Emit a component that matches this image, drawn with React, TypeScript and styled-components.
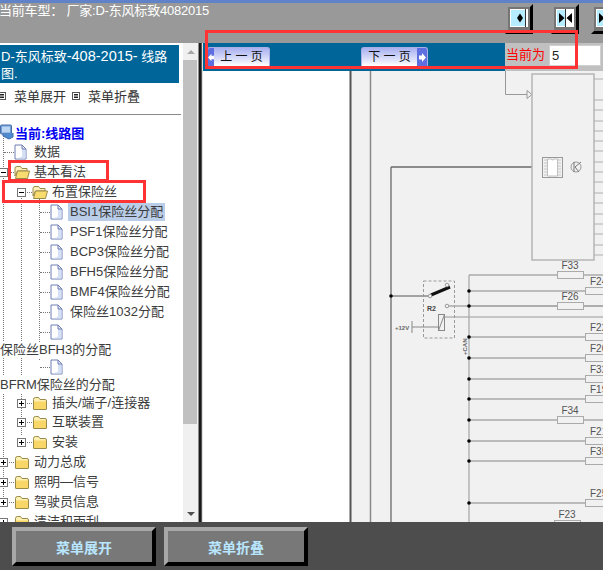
import styled, { createGlobalStyle } from 'styled-components'

const CJK = `'Liberation Sans', 'Noto Sans CJK SC', sans-serif`

const GlobalStyle = createGlobalStyle`
  html, body {
    margin: 0;
    padding: 0;
    background: #4d4d4d;
    overflow: hidden;
  }
  * {
    box-sizing: border-box;
  }
`

const Page = styled.div`
  position: relative;
  width: 603px;
  height: 570px;
  display: flex;
  flex-direction: column;
  overflow: hidden;
  font-family: ${CJK};
  font-size: 13px;
`

const TopBar = styled.header`
  height: 43px;
  flex: none;
  background: #999999;
  border-top: 3px solid #5f82c9;
  display: flex;
  align-items: flex-start;
  position: relative;
`

const CarModel = styled.div`
  width: 505px;
  flex: none;
  line-height: 16px;
  font-size: 13px;
  letter-spacing: -0.2px;
  text-indent: -1px;
  color: #ffffff;
  white-space: pre;
`

const TopButton = styled.div<{ $gap?: number }>`
  width: 28px;
  height: 30px;
  flex: none;
  margin-top: 1px;
  margin-left: ${({ $gap }) => $gap ?? 0}px;
  border-style: solid;
  border-width: 3px;
  border-color: #999999 #000000 #000000 #999999;
  background: #757575;
  padding: 2px 2px;
  display: flex;
`

const Main = styled.div`
  flex: 1;
  min-height: 0;
  display: flex;
`

const LeftPanel = styled.aside`
  width: 183px;
  flex: none;
  background: #ffffff;
  padding-top: 2px;
  overflow: hidden;
`

const PanelTitle = styled.div`
  width: 179px;
  height: 38px;
  background: #006699;
  color: #ffffff;
  padding: 3px 0 0 1px;
  font-size: 13px;
  line-height: 17px;
`

const TitleLatin = styled.span`
  font-size: 14.5px;
`

const MenuRow = styled.div`
  width: 181px;
  height: 32px;
  border-bottom: 1px solid #8a8a8a;
  display: flex;
  align-items: center;
  padding-bottom: 6px;
  color: #333333;
`

const MenuToggle = styled.span<{ $left: number }>`
  display: inline-flex;
  align-items: center;
  margin-left: ${({ $left }) => $left}px;
`

const MenuGlyph = styled.svg`
  width: 8px;
  height: 8px;
  margin-right: 8px;
  flex: none;
`

const Tree = styled.div`
  position: relative;
  padding-top: 7px;
  color: #3c3c3c;
`

const TreeGuide = styled.div<{ $left: number; $top: number; $height: number }>`
  position: absolute;
  left: ${({ $left }) => $left}px;
  top: ${({ $top }) => $top}px;
  height: ${({ $height }) => $height}px;
  border-left: 1px dotted #777777;
`

const Row = styled.div<{ $level: number; $height?: number }>`
  position: relative;
  height: ${({ $height }) => $height ?? 20}px;
  padding-left: ${({ $level }) => $level * 18}px;
  display: flex;
  align-items: center;
  white-space: nowrap;
`

const Slot = styled.span`
  position: relative;
  width: 14px;
  height: 100%;
  flex: none;
  &::after {
    content: '';
    position: absolute;
    left: 4px;
    right: 0;
    top: 50%;
    border-top: 1px dotted #777777;
  }
`

const Expander = styled.span`
  position: absolute;
  z-index: 1;
  left: -1px;
  top: 50%;
  margin-top: -4px;
  width: 9px;
  height: 9px;
  background: #ffffff;
  border: 1px solid #777777;
  &::before {
    content: '';
    position: absolute;
    left: 1px;
    right: 1px;
    top: 3px;
    height: 1px;
    background: #000000;
  }
`

const PlusExpander = styled(Expander)`
  &::after {
    content: '';
    position: absolute;
    top: 1px;
    bottom: 1px;
    left: 3px;
    width: 1px;
    background: #000000;
  }
`

const IconCell = styled.span`
  width: 16px;
  height: 16px;
  flex: none;
  display: flex;
`

const Label = styled.span<{ $selected?: boolean }>`
  margin-left: ${({ $selected }) => ($selected ? 2 : 4)}px;
  padding: ${({ $selected }) => ($selected ? '0 2px' : '0')};
  line-height: 18px;
  background: ${({ $selected }) => ($selected ? '#b9cde8' : 'transparent')};
`

const RootLabel = styled.span`
  color: #0000f0;
  font-weight: 700;
  margin-left: -1px;
`

const WrapLine = styled.div<{ $height: number }>`
  position: relative;
  height: ${({ $height }) => $height}px;
  line-height: ${({ $height }) => $height}px;
  white-space: nowrap;
  background: #ffffff;
`

const ScrollBar = styled.div`
  width: 15px;
  flex: none;
  background: #f0f0f0;
  display: flex;
  flex-direction: column;
  align-items: stretch;
`

const ScrollArrow = styled.div<{ $up?: boolean }>`
  height: 17px;
  flex: none;
  display: flex;
  align-items: center;
  justify-content: center;
  &::before {
    content: '';
    border-left: 4px solid transparent;
    border-right: 4px solid transparent;
    border-top: ${({ $up }) => ($up ? '0' : '4px solid #505050')};
    border-bottom: ${({ $up }) => ($up ? '4px solid #a8a8a8' : '0')};
  }
`

const ScrollThumb = styled.div`
  height: 364px;
  margin-right: 1px;
  background: #c0c0c0;
`

const ScrollTrack = styled.div`
  flex: 1;
`

const Divider = styled.div`
  width: 5px;
  flex: none;
  background: linear-gradient(90deg, #8c8c8c 0 1px, #1a1a1a 1px 3px, #555555 3px 4px, #e0e0e0 4px 5px);
`

const RightPanel = styled.main`
  flex: 1;
  min-width: 0;
  display: flex;
  flex-direction: column;
  background: #ffffff;
`

const PageToolbar = styled.div`
  height: 28px;
  flex: none;
  background: #006699;
  padding-left: 4px;
  display: flex;
  align-items: flex-start;
`

const PageButton = styled.div<{ $width: number; $gap?: number; $arrowRight?: boolean }>`
  width: ${({ $width }) => $width}px;
  height: 19px;
  margin-top: 4px;
  margin-left: ${({ $gap }) => $gap ?? 0}px;
  flex: none;
  display: flex;
  flex-direction: ${({ $arrowRight }) => ($arrowRight ? 'row-reverse' : 'row')};
  align-items: stretch;
  border-radius: 3px 3px 0 0;
  border: 1px solid #a9afe6;
  border-bottom: 0;
  background: linear-gradient(180deg, #a8b0f0 0%, #d6daf9 55%, #ffffff 100%);
  overflow: hidden;
  color: #111111;
  font-size: 12px;
  line-height: 18px;
`

const PageArrow = styled.span<{ $width: number }>`
  width: ${({ $width }) => $width}px;
  flex: none;
  background: #5d6fe0;
  display: flex;
  align-items: center;
  justify-content: center;
`

const PageText = styled.span`
  flex: 1;
  text-align: center;
  white-space: pre;
`

const PageBox = styled.div`
  margin-left: auto;
  width: 98px;
  height: 28px;
  background: #c0c0c0;
  display: flex;
  align-items: center;
  padding-left: 1px;
`

const PageCaption = styled.span`
  color: #ff0000;
  font-size: 13px;
  line-height: 18px;
  width: 43px;
  flex: none;
  margin-bottom: 4px;
`

const PageInput = styled.div`
  width: 52px;
  height: 21px;
  margin-bottom: 3px;
  background: #ffffff;
  border: 1px solid #d0d0d0;
  padding-left: 2px;
  line-height: 19px;
  font-size: 13px;
  color: #222222;
`

const Sheet = styled.div`
  flex: 1;
  min-height: 0;
  background: #ffffff;
`

const Drawing = styled.svg`
  display: block;
  width: 400px;
  height: 451px;
`

const BottomBar = styled.footer`
  height: 48px;
  flex: none;
  background: #4d4d4d;
  padding: 5px 0 0 12px;
  display: flex;
  gap: 8px;
  align-items: flex-start;
`

const BevelButton = styled.div`
  width: 144px;
  height: 39px;
  border-style: solid;
  border-width: 4px;
  border-color: #a8a8a8 #000000 #000000 #a8a8a8;
  background: #787878;
  color: #b9e6ff;
  font-weight: 700;
  font-size: 14px;
  display: flex;
  align-items: center;
  justify-content: center;
`

const Annotation = styled.div<{ $x: number; $y: number; $w: number; $h: number }>`
  position: absolute;
  left: ${({ $x }) => $x}px;
  top: ${({ $y }) => $y}px;
  width: ${({ $w }) => $w}px;
  height: ${({ $h }) => $h}px;
  border: 3px solid #ff3333;
  pointer-events: none;
  z-index: 5;
`

const FolderIcon = () => (
  <svg width="16" height="16" viewBox="0 0 16 16">
    <path d="M1.5 4.500 Q1.500 2.500 3.500 2.500 H6.500 L8 4.500 H13 Q14.500 4.500 14.500 6 V14 Q14.500 14.500 14 14.500 H2 Q1.500 14.500 1.500 14 Z" fill="#fdf0b0" stroke="#9a8a4a" />
    <path d="M2 6.500 H14 V14 H2 Z" fill="#f8d768" />
  </svg>
)

const OpenFolderIcon = () => (
  <svg width="16" height="16" viewBox="0 0 16 16">
    <path d="M1 4.500 Q1 2.500 3 2.500 H6.500 L8 4.500 H13 V7 H3.500 L1 12 Z" fill="#fdf0b8" stroke="#9a8a4a" />
    <path d="M3.500 7 H15.500 L13.500 14.500 H1.500 Z" fill="#f9dc70" stroke="#9a8a4a" />
  </svg>
)

const DocIcon = () => (
  <svg width="13" height="16" viewBox="0 0 13 16">
    <path d="M1 1 H8 L12 5 V15 H1 Z" fill="#ffffff" stroke="#6f7fb5" />
    <path d="M1.500 14.500 H11.500 V6 L8 2 V12 Q8 13 6 13.500 Z" fill="#d5e0f5" />
    <path d="M8 1 V5 H12" fill="none" stroke="#6f7fb5" />
  </svg>
)

const ComputerIcon = () => (
  <svg width="14" height="16" viewBox="0 0 14 16">
    <rect x="0.5" y="1" width="11" height="9" rx="1" fill="#6f9fd8" stroke="#4a6fa8" />
    <rect x="2" y="2.5" width="8" height="6" fill="#bcd6f2" />
    <path d="M3 10 V12 L9 15 L13 13 L13 9" fill="#4f8bd0" stroke="#3d6ca8" />
  </svg>
)

const MenuSquare = () => (
  <MenuGlyph viewBox="0 0 8 8">
    <rect x="0.5" y="0.5" width="7" height="7" fill="#fff" stroke="#555" />
    <path d="M2 2.500 H6 M2 4 H6 M2 5.500 H6" stroke="#222" />
  </MenuGlyph>
)

const SplitIcon = ({ kind }: { kind: 'single' | 'pair' }) => (
  <svg width="18" height="18" viewBox="0 0 18 18">
    <rect x="0" y="0" width="18" height="18" fill="#ffffff" />
    <rect x="1" y="1" width={kind === 'single' ? 14 : 9} height="16" fill="#b5ecff" />
    <path d={kind === 'single' ? 'M15.500 0 V18' : 'M9.500 0 V18'} stroke="#333" />
    {kind === 'single' ? (
      <path d="M7 9 L10 4.500 L13 9 L10 13.500 Z" fill="#000" />
    ) : (
      <path d="M3 4 L8.500 9 L3 14 Z M16 4 L10.500 9 L16 14 Z" fill="#000" />
    )}
  </svg>
)

const Arrow = ({ left }: { left?: boolean }) => (
  <svg width="7" height="9" viewBox="0 0 7 9">
    <path d={left ? 'M0 4.500 L4 0 V2.500 H7 V6.500 H4 V9 Z' : 'M7 4.500 L3 0 V2.500 H0 V6.500 H3 V9 Z'} fill="#ffffff" />
  </svg>
)

const busRows = [291, 306, 337, 358, 379, 399, 420, 441, 461, 503]
const wideFuses: { label: string; y: number; x: number }[] = [
  { label: 'F33', y: 275, x: 557 },
  { label: 'F26', y: 306, x: 557 },
  { label: 'F34', y: 420, x: 557 },
  { label: 'F23', y: 524, x: 554 },
]
const edgeFuses: { label: string; y: number }[] = [
  { label: 'F24', y: 291 },
  { label: 'F22', y: 337 },
  { label: 'F20', y: 358 },
  { label: 'F32', y: 379 },
  { label: 'F19', y: 399 },
  { label: 'F21', y: 441 },
  { label: 'F35', y: 461 },
  { label: 'F25', y: 503 },
]
const stubs = [79, 100, 110, 121, 131, 141, 151, 162, 172, 182, 193, 203, 214, 224, 234, 245, 255]
const chipPins = [160, 163, 166, 169, 172, 175]

const WiringDiagram = () => (
  <Drawing viewBox="203 71 400 451">
    <rect x="350" y="71" width="253" height="451" fill="#f1f1f1" />
    <path d="M350.500 71 V522" stroke="#555" strokeWidth="2" />
    <path d="M370.500 71 V522" stroke="#8a8a8a" strokeWidth="1.5" />
    <path d="M391 167 H532 M391 167 V522" stroke="#6a6a6a" strokeWidth="1.3" fill="none" />
    <path d="M505.500 71 V94.500 H527" stroke="#999" fill="none" />
    <path d="M527 90.500 L532 94.500 L527 98.500 Z" fill="#f1f1f1" stroke="#999" />
    <rect x="532" y="74" width="62" height="186" fill="#f1f1f1" stroke="#b5b5b5" strokeWidth="1.5" />
    {stubs.map(y => (
      <path key={y} d={`M594 ${y} H603`} stroke="#b0b0b0" />
    ))}
    <rect x="542.500" y="157.500" width="20" height="20" fill="#f1f1f1" stroke="#999" />
    {chipPins.map(y => (
      <path key={y} d={`M544 ${y} H561`} stroke="#c8c8c8" />
    ))}
    <path d="M547.500 159 H551 Q552.500 161 554 159 H557.500 V176 H547.500 Z" fill="#ffffff" stroke="#c0c0c0" />
    <circle cx="576" cy="167" r="5" fill="none" stroke="#999" />
    <path d="M574 162 V172 M575 167 L581 162 M575 167 L579 172" stroke="#777" fill="none" />

    <path d="M391 296 H430" stroke="#555" />
    <circle cx="391" cy="296" r="1.800" fill="#000" />
    <rect x="423.500" y="281" width="31" height="57" fill="none" stroke="#999" strokeDasharray="3 2" />
    <path d="M431 295 L450 287" stroke="#111" strokeWidth="3" />
    <circle cx="430" cy="296" r="1.800" fill="#f1f1f1" stroke="#999" />
    <circle cx="447" cy="285" r="1.800" fill="#f1f1f1" stroke="#999" />
    <circle cx="447" cy="306" r="1.800" fill="#f1f1f1" stroke="#999" />
    <text x="427" y="311" fontSize="7" fontWeight="700" fill="#444" fontFamily="Liberation Sans">R2</text>
    <rect x="438.500" y="314.500" width="6" height="16" fill="none" stroke="#888" />
    <path d="M438.500 330.500 L444.500 314.500" stroke="#888" />
    <path d="M444 317 H603" stroke="#999" />
    <path d="M412 327 H438 M412 321 V333" stroke="#888" fill="none" />
    <text x="395" y="329.500" fontSize="6" fontWeight="700" fill="#666" fontFamily="Liberation Sans">+12V</text>

    <path d="M469 275 V522" stroke="#aaa" strokeWidth="1.3" />
    <path d="M469 275 H603" stroke="#aaa" strokeWidth="1.3" />
    <path d="M449 306 H603" stroke="#aaa" strokeWidth="1.3" />
    {busRows.map(y => (
      <g key={y}>
        <path d={`M469 ${y} H603`} stroke="#a8a8a8" strokeWidth="1.3" />
        <circle cx="469" cy={y} r="1.800" fill="#000" />
      </g>
    ))}
    <text transform="translate(467 355) rotate(-90)" fontSize="6" fontWeight="700" fill="#666" fontFamily="Liberation Sans">+CAN</text>
    {wideFuses.map(fuse => (
      <g key={fuse.label}>
        <rect x={fuse.x + 0.5} y={fuse.y - 3.5} width="26" height="7" fill="#f1f1f1" stroke="#aaa" />
        <text x={fuse.x + 13} y={fuse.y - 6} textAnchor="middle" fontSize="10" fill="#555" fontFamily="Liberation Sans">{fuse.label}</text>
      </g>
    ))}
    {edgeFuses.map(fuse => (
      <g key={fuse.label}>
        <rect x="585.500" y={fuse.y - 3.5} width="26" height="7" fill="#f1f1f1" stroke="#aaa" />
        <text x="590" y={fuse.y - 6} fontSize="10" fill="#555" fontFamily="Liberation Sans">{fuse.label}</text>
      </g>
    ))}
  </Drawing>
)

const leafItems = ['BSI1保险丝分配', 'PSF1保险丝分配', 'BCP3保险丝分配', 'BFH5保险丝分配', 'BMF4保险丝分配', '保险丝1032分配']

const closedLevel1 = ['插头/端子/连接器', '互联装置', '安装']
const closedLevel0 = ['动力总成', '照明—信号', '驾驶员信息', '清洁和雨刮']

export default function App() {
  return (
    <Page>
      <GlobalStyle />
      <TopBar>
        <CarModel>当前车型： 厂家:D-东风标致4082015</CarModel>
        <TopButton>
          <SplitIcon kind="single" />
        </TopButton>
        <TopButton $gap={18}>
          <SplitIcon kind="pair" />
        </TopButton>
        <TopButton $gap={12}>
          <SplitIcon kind="pair" />
        </TopButton>
      </TopBar>
      <Main>
        <LeftPanel>
          <PanelTitle>
            D-东风标致<TitleLatin>-408-2015-</TitleLatin> 线路
            <br />
            图.
          </PanelTitle>
          <MenuRow>
            <MenuToggle $left={-2}>
              <MenuSquare />
              菜单展开
            </MenuToggle>
            <MenuToggle $left={6}>
              <MenuSquare />
              菜单折叠
            </MenuToggle>
          </MenuRow>
          <Tree>
            <TreeGuide $left={3} $top={18} $height={372} />
            <TreeGuide $left={21} $top={78} $height={242} />
            <TreeGuide $left={39} $top={78} $height={167} />
            <Row $level={0}>
              <IconCell>
                <ComputerIcon />
              </IconCell>
              <RootLabel>当前:线路图</RootLabel>
            </Row>
            <Row $level={0}>
              <Slot />
              <IconCell>
                <DocIcon />
              </IconCell>
              <Label>数据</Label>
            </Row>
            <Row $level={0}>
              <Slot>
                <Expander />
              </Slot>
              <IconCell>
                <OpenFolderIcon />
              </IconCell>
              <Label>基本看法</Label>
            </Row>
            <Row $level={1}>
              <Slot>
                <Expander />
              </Slot>
              <IconCell>
                <OpenFolderIcon />
              </IconCell>
              <Label>布置保险丝</Label>
            </Row>
            {leafItems.map((item, index) => (
              <Row $level={2} key={item}>
                <Slot />
                <IconCell>
                  <DocIcon />
                </IconCell>
                <Label $selected={index === 0}>{item}</Label>
              </Row>
            ))}
            <Row $level={2}>
              <Slot />
              <IconCell>
                <DocIcon />
              </IconCell>
            </Row>
            <WrapLine $height={16}>保险丝BFH3的分配</WrapLine>
            <Row $level={2} $height={18}>
              <Slot />
              <IconCell>
                <DocIcon />
              </IconCell>
            </Row>
            <WrapLine $height={17}>BFRM保险丝的分配</WrapLine>
            {closedLevel1.map((item, index) => (
              <Row $level={1} $height={index === 0 ? 19 : 20} key={item}>
                <Slot>
                  <PlusExpander />
                </Slot>
                <IconCell>
                  <FolderIcon />
                </IconCell>
                <Label>{item}</Label>
              </Row>
            ))}
            {closedLevel0.map(item => (
              <Row $level={0} key={item}>
                <Slot>
                  <PlusExpander />
                </Slot>
                <IconCell>
                  <FolderIcon />
                </IconCell>
                <Label>{item}</Label>
              </Row>
            ))}
          </Tree>
        </LeftPanel>
        <ScrollBar>
          <ScrollArrow $up />
          <ScrollThumb />
          <ScrollTrack />
          <ScrollArrow />
        </ScrollBar>
        <Divider />
        <RightPanel>
          <PageToolbar>
            <PageButton $width={63}>
              <PageArrow $width={6}>
                <Arrow left />
              </PageArrow>
              <PageText>上 一 页</PageText>
            </PageButton>
            <PageButton $width={67} $gap={91} $arrowRight>
              <PageArrow $width={10}>
                <Arrow />
              </PageArrow>
              <PageText>下 一 页</PageText>
            </PageButton>
            <PageBox>
              <PageCaption>当前为</PageCaption>
              <PageInput>5</PageInput>
            </PageBox>
          </PageToolbar>
          <Sheet>
            <WiringDiagram />
          </Sheet>
        </RightPanel>
      </Main>
      <BottomBar>
        <BevelButton>菜单展开</BevelButton>
        <BevelButton>菜单折叠</BevelButton>
      </BottomBar>
      <Annotation $x={205} $y={30} $w={373} $h={39} />
      <Annotation $x={8} $y={160} $w={101} $h={22} />
      <Annotation $x={2} $y={180} $w={144} $h={23} />
    </Page>
  )
}
